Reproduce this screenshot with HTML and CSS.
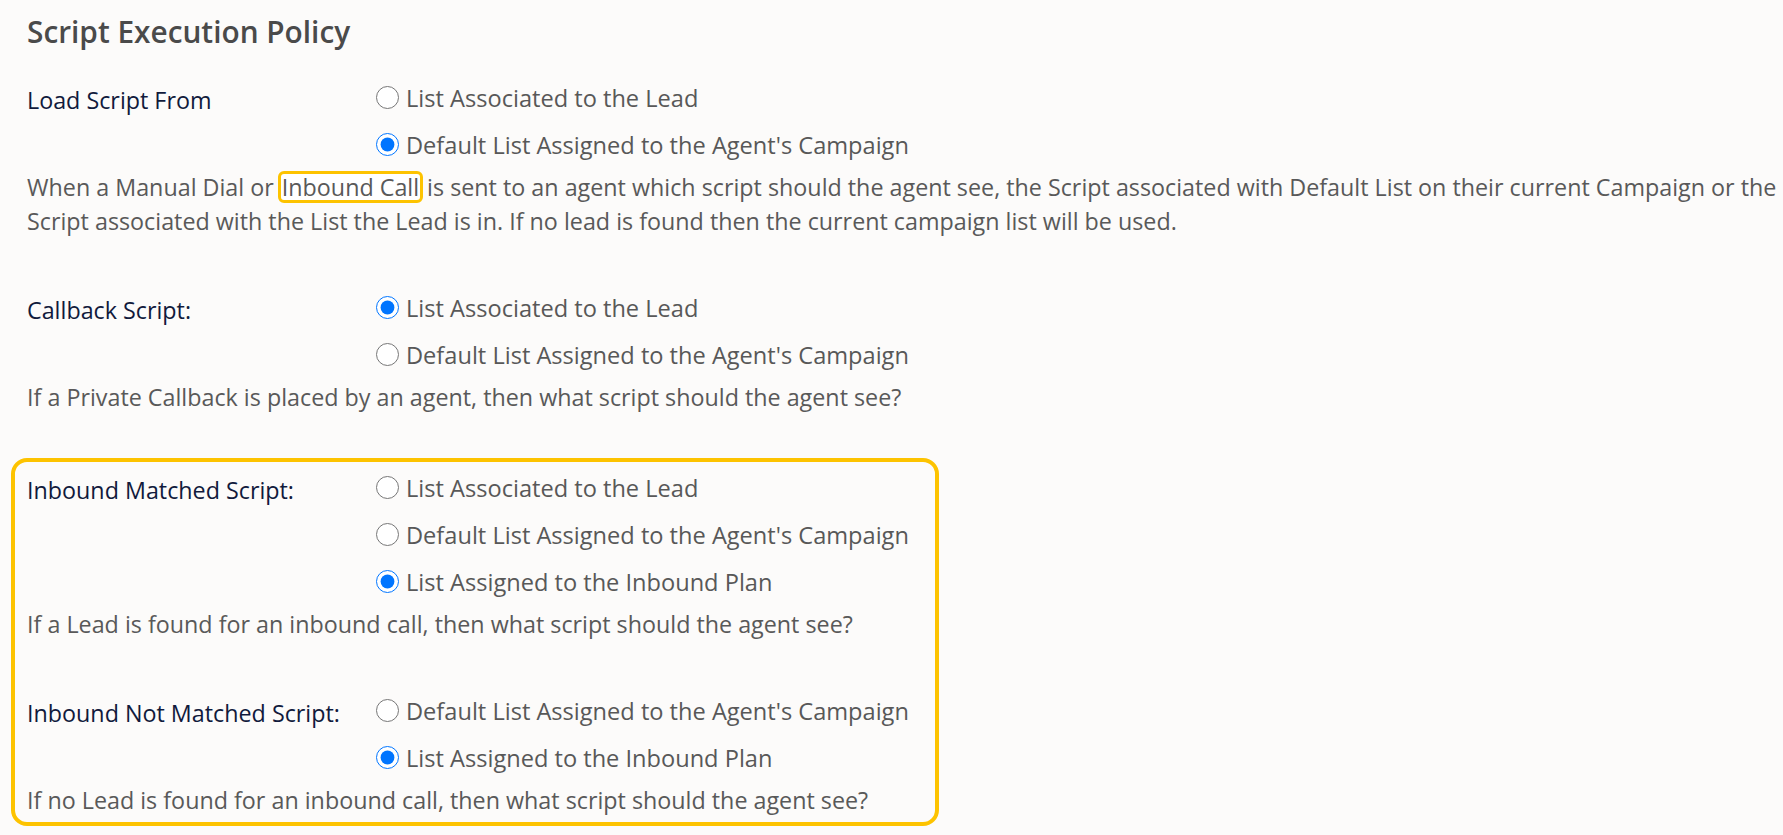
FILE: index.html
```html
<!DOCTYPE html>
<html lang="en">
<head>
<meta charset="utf-8">
<title>Script Execution Policy</title>
<link rel="stylesheet" href="styles.css">
</head>
<body>
<div class="page">
  <h1 class="title">Script Execution Policy</h1>

  <div class="section">
    <div class="row">
      <div class="label">Load Script From</div>
      <div class="options">
        <label class="opt"><input type="radio" name="load"> List Associated to the Lead</label>
        <label class="opt"><input type="radio" name="load" checked> Default List Assigned to the Agent's Campaign</label>
      </div>
    </div>
    <p class="desc"><span>When a Manual Dial or</span><span class="mark">Inbound Call</span><span>is sent to an agent which script should the agent see, the Script associated with Default List on their current Campaign or the</span><br><span>Script associated with the List the Lead is in. If no lead is found then the current campaign list will be used.</span></p>
  </div>

  <div class="section">
    <div class="row">
      <div class="label">Callback Script:</div>
      <div class="options">
        <label class="opt"><input type="radio" name="cb" checked> List Associated to the Lead</label>
        <label class="opt"><input type="radio" name="cb"> Default List Assigned to the Agent's Campaign</label>
      </div>
    </div>
    <p class="desc">If a Private Callback is placed by an agent, then what script should the agent see?</p>
  </div>

  <div class="highlight">
    <div class="section first">
      <div class="row">
        <div class="label">Inbound Matched Script:</div>
        <div class="options">
          <label class="opt"><input type="radio" name="im"> List Associated to the Lead</label>
          <label class="opt"><input type="radio" name="im"> Default List Assigned to the Agent's Campaign</label>
          <label class="opt"><input type="radio" name="im" checked> List Assigned to the Inbound Plan</label>
        </div>
      </div>
      <p class="desc">If a Lead is found for an inbound call, then what script should the agent see?</p>
    </div>

    <div class="section">
      <div class="row">
        <div class="label">Inbound Not Matched Script:</div>
        <div class="options">
          <label class="opt"><input type="radio" name="inm"> Default List Assigned to the Agent's Campaign</label>
          <label class="opt"><input type="radio" name="inm" checked> List Assigned to the Inbound Plan</label>
        </div>
      </div>
      <p class="desc">If no Lead is found for an inbound call, then what script should the agent see?</p>
    </div>
  </div>
</div>
</body>
</html>
```

FILE: styles.css
```css
html, body {
  margin: 0;
  padding: 0;
  background: #fcfbfa;
}

body {
  font-family: "Open Sans", "Noto Sans", "Liberation Sans", sans-serif;
  font-size: 23.3px;
  color: #595959;
}

.page {
  padding: 15px 0 0 11px;
}

.title {
  margin: 0 0 25px 0;
  padding-left: 16px;
  font-size: 29.8px;
  line-height: 34px;
  font-weight: 600;
  color: #4a4a4a;
}

.section {
  padding-left: 16px;
  margin-top: 46px;
}

.title + .section {
  margin-top: 0;
}

.row {
  display: grid;
  grid-template-columns: 349px 1fr;
}

.label {
  line-height: 47px;
  padding-top: 3px;
  color: #111a3c;
}

.options {
  display: flex;
  flex-direction: column;
}

.opt {
  display: flex;
  align-items: center;
  gap: 7px;
  height: 47px;
  font-size: 23.6px;
  color: #585858;
}

.opt input {
  width: 23px;
  height: 23px;
  margin: 0;
  accent-color: #0075ff;
}

.desc {
  margin: 2px 0 0 0;
  line-height: 34px;
  white-space: nowrap;
}

.mark {
  display: inline-block;
  line-height: 26px;
  margin: 0 4px;
  border: 3px solid #fdc300;
  border-radius: 6px;
  background: #ffffff;
  padding: 0 1px;
}

.highlight {
  width: 920px;
  margin-top: 44px;
  padding: 2px 0 5px 0;
  border: 4px solid #fdc300;
  border-radius: 16px;
}

.highlight .section {
  padding-left: 12px;
}

.highlight .section.first {
  margin-top: 0;
}
```
